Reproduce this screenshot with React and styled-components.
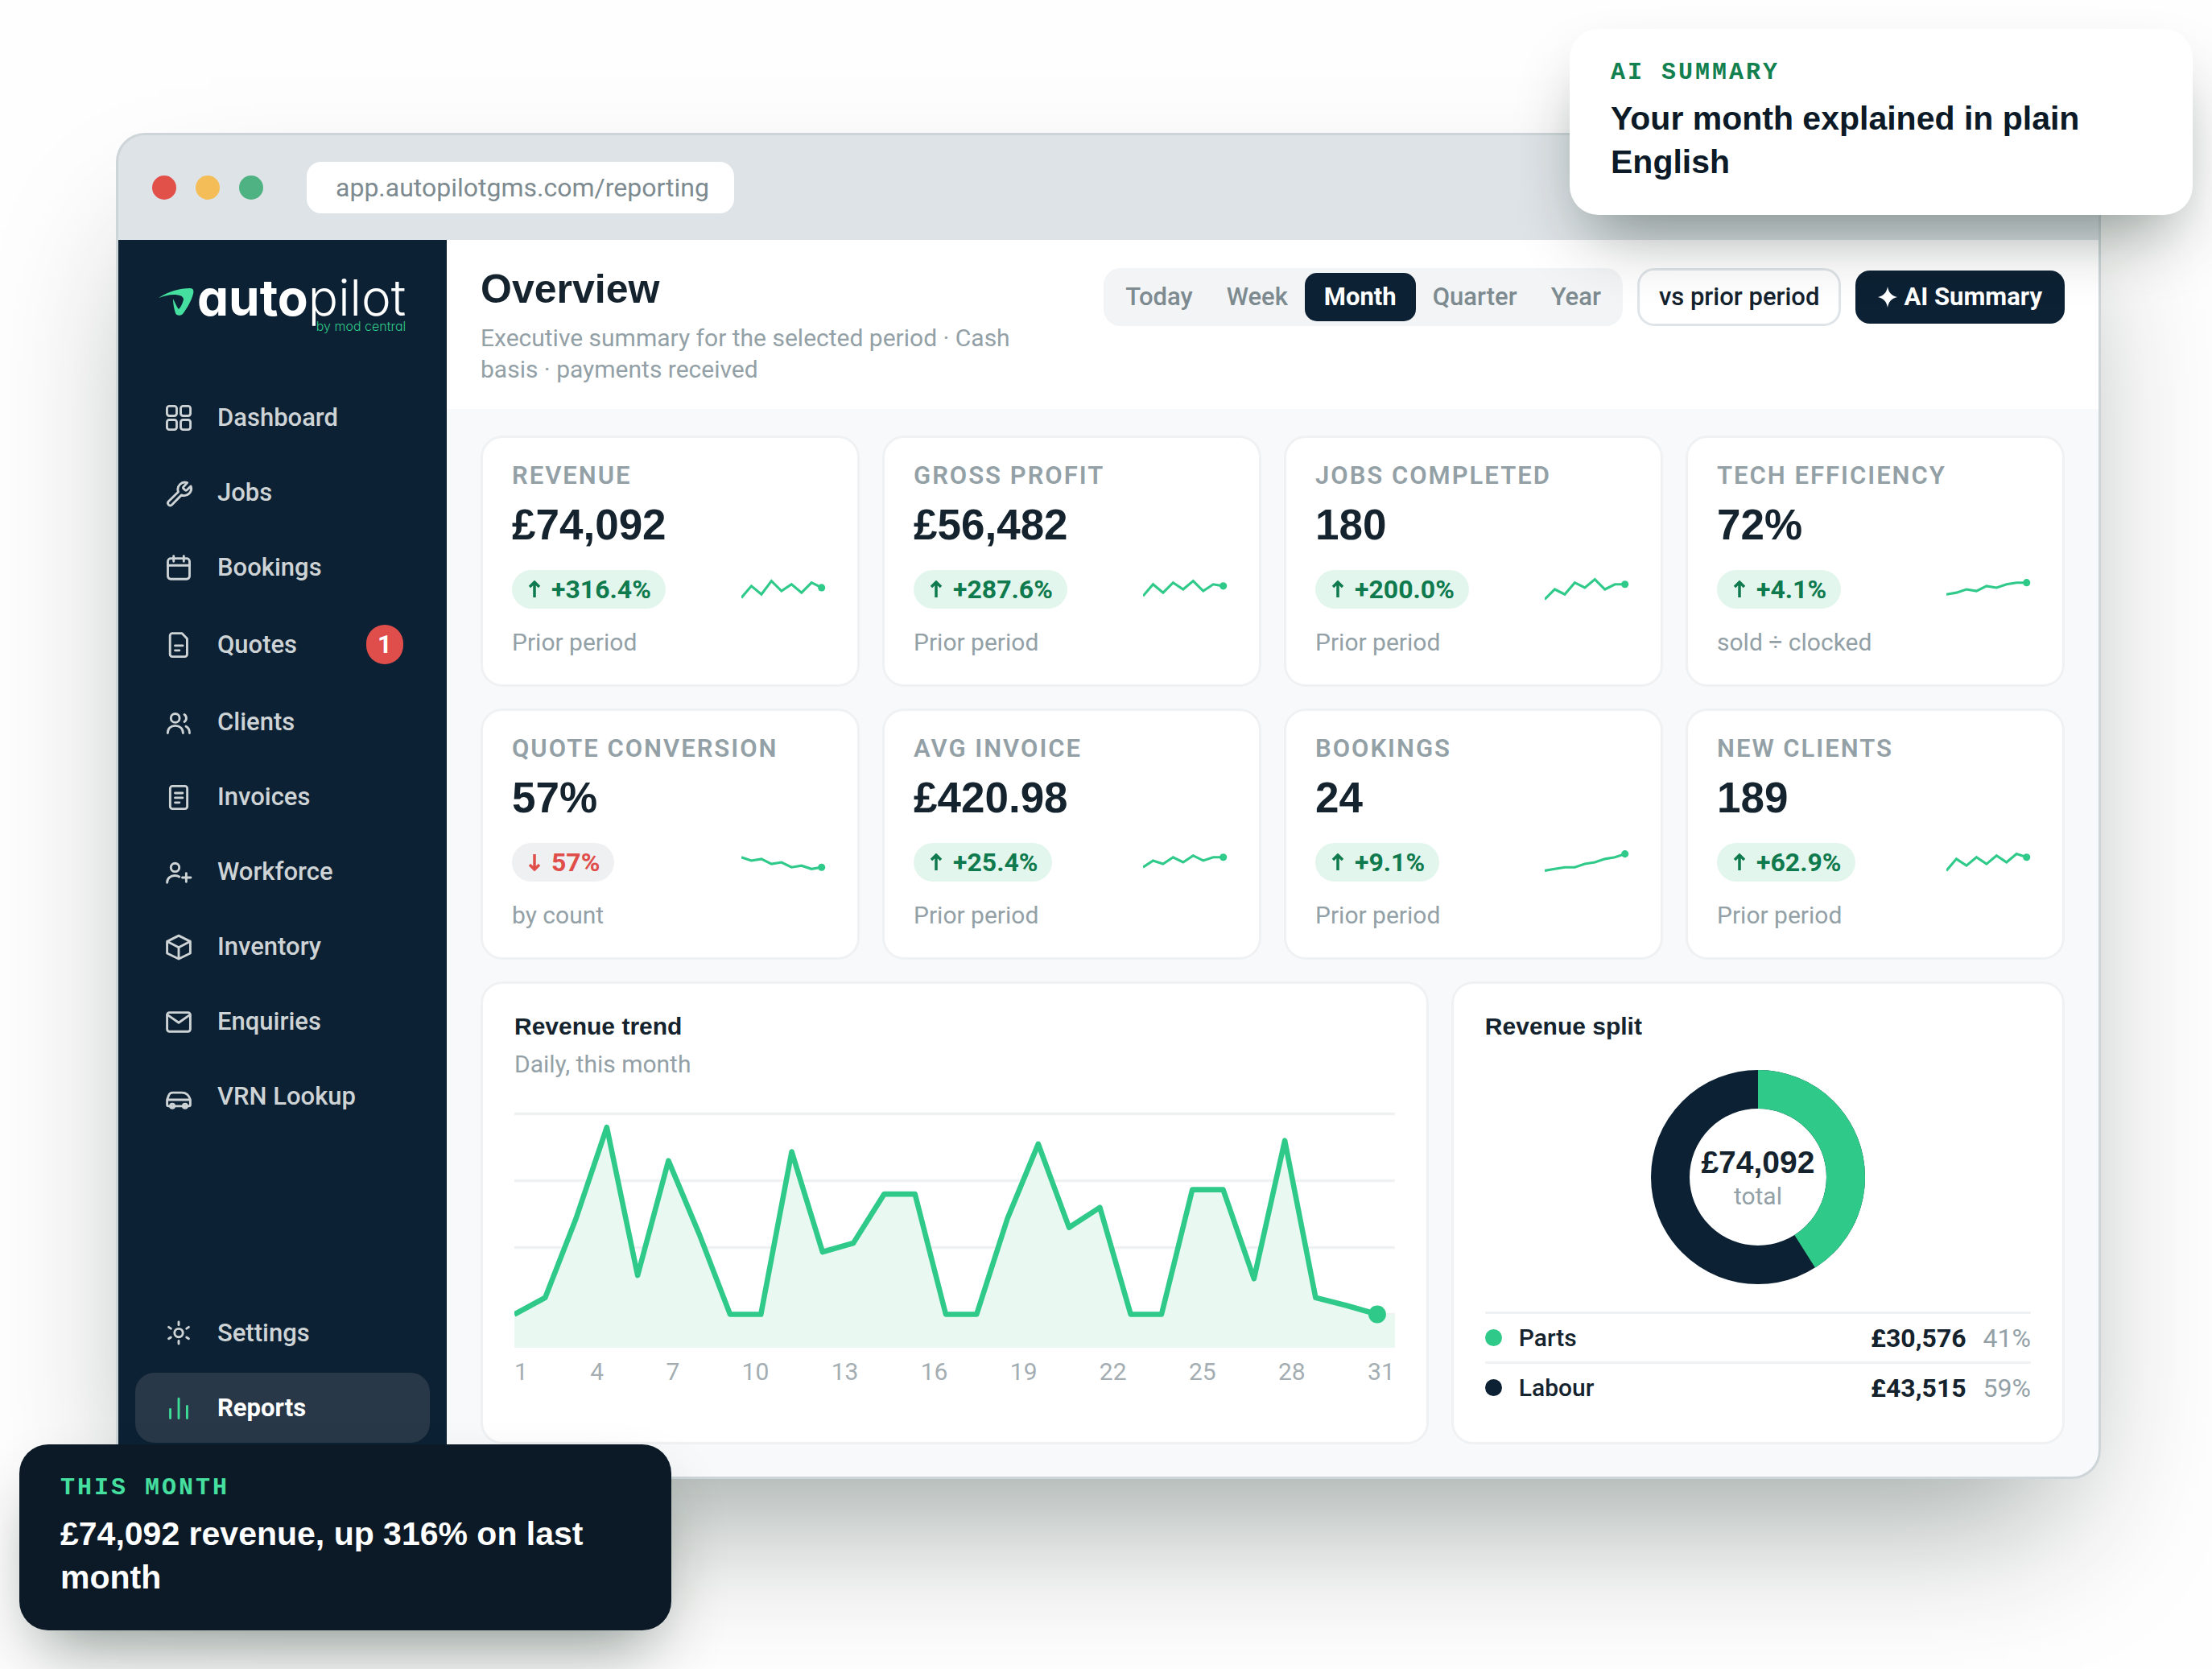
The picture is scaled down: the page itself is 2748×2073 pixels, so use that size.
import React from 'react';
import styled, { createGlobalStyle } from 'styled-components';

const sans = 'Roboto, "Noto Sans", sans-serif';
const display = '"Liberation Sans", Arial, sans-serif';
const mono = '"Liberation Mono", "Courier New", monospace';

const navy = '#0c2133';
const ink = '#14232d';
const grey = '#93a1a7';
const green = '#2fca89';
const line = '#eff1f3';

const mainNav = [
  { label: 'Dashboard', icon: 'dashboard' },
  { label: 'Jobs', icon: 'jobs' },
  { label: 'Bookings', icon: 'bookings' },
  { label: 'Quotes', icon: 'quotes', badge: 1 },
  { label: 'Clients', icon: 'clients' },
  { label: 'Invoices', icon: 'invoices' },
  { label: 'Workforce', icon: 'workforce' },
  { label: 'Inventory', icon: 'inventory' },
  { label: 'Enquiries', icon: 'enquiries' },
  { label: 'VRN Lookup', icon: 'vrn' },
];

const footNav = [
  { label: 'Settings', icon: 'settings' },
  { label: 'Reports', icon: 'reports', active: true },
];

const periods = ['Today', 'Week', 'Month', 'Quarter', 'Year'];

const kpis = [
  { label: 'Revenue', value: '£74,092', change: '+316.4%', note: 'Prior period', spark: [15, 8, 13, 5, 11, 7, 12, 6, 9] },
  { label: 'Gross profit', value: '£56,482', change: '+287.6%', note: 'Prior period', spark: [14, 7, 12, 6, 10, 5, 11, 7, 8] },
  { label: 'Jobs completed', value: '180', change: '+200.0%', note: 'Prior period', spark: [16, 10, 13, 6, 9, 4, 10, 7, 7] },
  { label: 'Tech efficiency', value: '72%', change: '+4.1%', note: 'sold ÷ clocked', spark: [13, 12, 10, 11, 8, 9, 7, 6, 6] },
  { label: 'Quote conversion', value: '57%', change: '57%', down: true, note: 'by count', spark: [7, 9, 8, 11, 10, 13, 12, 14, 13] },
  { label: 'Avg invoice', value: '£420.98', change: '+25.4%', note: 'Prior period', spark: [13, 9, 11, 7, 10, 6, 9, 7, 7] },
  { label: 'Bookings', value: '24', change: '+9.1%', note: 'Prior period', spark: [15, 14, 13, 13, 11, 10, 8, 7, 5] },
  { label: 'New clients', value: '189', change: '+62.9%', note: 'Prior period', spark: [15, 8, 12, 7, 11, 6, 10, 5, 7] },
];

const trend = [
  105, 97.5, 62, 21, 87.5, 36, 69, 105, 105, 32, 77, 73, 51, 51, 105,
  105, 62, 28.5, 66, 57, 105, 105, 49, 49, 89, 27, 97.5, 101, 105,
];
const days = [1, 4, 7, 10, 13, 16, 19, 22, 25, 28, 31];

const split = [
  { label: 'Parts', amount: '£30,576', share: 41, color: green },
  { label: 'Labour', amount: '£43,515', share: 59, color: navy },
];

const icons = {
  dashboard: (
    <>
      <rect x="1.9" y="1.9" width="6.7" height="6.7" rx="1.6" />
      <rect x="11.4" y="1.9" width="6.7" height="6.7" rx="1.6" />
      <rect x="1.9" y="11.4" width="6.7" height="6.7" rx="1.6" />
      <rect x="11.4" y="11.4" width="6.7" height="6.7" rx="1.6" />
    </>
  ),
  jobs: <path d="M15.9 3.1a4.9 4.9 0 0 0-6.2 6.3L3 16a1.7 1.7 0 0 0 0 2.3 1.7 1.7 0 0 0 2.3 0l6.6-6.7a4.9 4.9 0 0 0 6.5-6.1l-2.7 2.6a1 1 0 0 1-1.4 0l-.9-.9a1 1 0 0 1 0-1.4z" />,
  bookings: (
    <>
      <rect x="2.5" y="3.7" width="15" height="14.2" rx="2" />
      <path d="M2.5 8.5h15M6.5 2v3.7M13.5 2v3.7" />
    </>
  ),
  quotes: <path d="M5.6 2h6.6l3.6 3.7v10.8a1.6 1.6 0 0 1-1.6 1.6H5.6A1.6 1.6 0 0 1 4 16.5V3.6A1.6 1.6 0 0 1 5.6 2zM7.5 10.5h5.3M7.5 13.8h3" />,
  clients: (
    <>
      <circle cx="7.6" cy="7.2" r="3" />
      <path d="M2.4 17.5c0-3.2 2.2-5.1 5.2-5.1s5.4 1.9 5.4 5.1M13.9 4.7a3 3 0 0 1 0 5M15 12.9c1.6.8 2.5 2.4 2.5 4.6" />
    </>
  ),
  invoices: (
    <>
      <rect x="4.1" y="2.4" width="11.8" height="15.7" rx="1.6" />
      <path d="M7.5 7.2h5.2M7.5 10.5h5.2M7.5 13.8h3" />
    </>
  ),
  workforce: (
    <>
      <circle cx="7.5" cy="6.9" r="2.9" />
      <path d="M2 17.4c0-3 2.4-4.9 5.3-4.9 1.2 0 2.3.3 3.1.8M12.5 13.9h5.8M15.2 10.9v5.9" />
    </>
  ),
  inventory: <path d="M10 2.3l8 4v8.1l-8 3.9-8-3.9V6.3zM2 6.3l8 4.1 8-4.1M10 10.4v7.9" />,
  enquiries: (
    <>
      <rect x="2" y="3.7" width="16" height="13.1" rx="1.6" />
      <path d="M2.2 5.2L10 10.7l7.8-5.5" />
    </>
  ),
  vrn: (
    <>
      <path d="M2 12.2l1-2.7c.5-1.5 1.4-2.2 2.8-2.2h6.4c3.1 0 5 2 5.8 4.9v3.4a1 1 0 0 1-1 1H3a1 1 0 0 1-1-1zM2 12.2h16" />
      <circle cx="5.6" cy="16.5" r="1.4" />
      <circle cx="14.4" cy="16.5" r="1.4" />
    </>
  ),
  settings: (
    <>
      <circle cx="10" cy="10.3" r="2.9" />
      <path d="M10 2.8v2M10 15.8v2M3.1 6.3l1.5 1M15.4 13.3l1.5 1M3.1 14.3l1.5-1M15.4 7.3l1.5-1" />
    </>
  ),
  reports: <path d="M4.2 11.3v6.2M10 4v13.5M15.8 9.1v8.4" />,
};

const Icon = ({ name }) => (
  <NavIcon viewBox="0 0 20 20" aria-hidden="true">
    {icons[name]}
  </NavIcon>
);

const NavLink = ({ item }) => (
  <NavItem href="#" $active={item.active}>
    <Icon name={item.icon} />
    <span>{item.label}</span>
    {item.badge && <Badge>{item.badge}</Badge>}
  </NavItem>
);

const Logo = () => (
  <Brand>
    <Swoosh viewBox="0 0 44 34" aria-hidden="true">
      <path d="M0 12C12 4 26 0 39 0c4 0 5 2 4 7-2 8-7 17-13 25-3 3-8 2-9-1-2-6-3-12-3-18 3 6 5 11 7 13 3-3 5-8 6-12 0-4-5-6-12-6-6 0-13 2-19 4z" />
    </Swoosh>
    <Wordmark>
      <b>auto</b>pilot
      <Byline>by mod central</Byline>
    </Wordmark>
  </Brand>
);

const Sparkline = ({ data }) => {
  const points = data.map((y, i) => `${i * 6},${y}`).join(' ');
  return (
    <Spark viewBox="0 0 52 20" aria-hidden="true">
      <polyline points={points} />
      <circle cx="48" cy={data[data.length - 1]} r="2.2" />
    </Spark>
  );
};

const KpiCard = ({ item }) => (
  <Kpi>
    <KpiLabel>{item.label}</KpiLabel>
    <KpiValue>{item.value}</KpiValue>
    <KpiRow>
      <Pill $down={item.down}>
        <svg viewBox="0 0 16 22" aria-hidden="true">
          <path d={item.down ? 'M8 1v19M2 14l6 6 6-6' : 'M8 21V2M2 8l6-6 6 6'} />
        </svg>
        {item.change}
      </Pill>
      <Sparkline data={item.spark} />
    </KpiRow>
    <Muted>{item.note}</Muted>
  </Kpi>
);

const TrendChart = () => {
  const points = trend.map((y, i) => `${i * 14},${y}`).join(' ');
  return (
    <Chart viewBox="0 0 400 120" preserveAspectRatio="none" role="img" aria-label="Daily revenue">
      {[15, 45, 75, 105].map((y) => (
        <line key={y} x1="0" x2="400" y1={y} y2={y} />
      ))}
      <polygon points={`${points} 400,105 400,120 0,120`} />
      <polyline points={points} />
      <circle cx="392" cy="105" r="4" />
    </Chart>
  );
};

const App = () => {
  const ring = 2 * Math.PI * 109;
  return (
    <Stage>
      <GlobalStyle />
      <Browser>
        <TitleBar>
          <Light $color="#e2504a" />
          <Light $color="#f4bd58" />
          <Light $color="#4fb282" />
          <Address aria-label="Address" readOnly value="app.autopilotgms.com/reporting" />
        </TitleBar>
        <Body>
          <Sidebar>
            <Logo />
            <Nav>
              {mainNav.map((item) => (
                <NavLink key={item.label} item={item} />
              ))}
            </Nav>
            <Nav>
              {footNav.map((item) => (
                <NavLink key={item.label} item={item} />
              ))}
            </Nav>
          </Sidebar>
          <Main>
            <Header>
              <div>
                <Title>Overview</Title>
                <Subtitle>Executive summary for the selected period · Cash basis · payments received</Subtitle>
              </div>
              <Controls>
                <Segments>
                  {periods.map((p) => (
                    <Segment key={p} type="button" $active={p === 'Month'}>{p}</Segment>
                  ))}
                </Segments>
                <Compare type="button">vs prior period</Compare>
                <AiButton type="button">
                  <svg viewBox="0 0 24 26" aria-hidden="true">
                    <path d="M12 0c1.5 7.5 4.5 11 12 13-7.5 2-10.5 5.5-12 13-1.5-7.5-4.5-11-12-13 7.5-2 10.5-5.5 12-13z" />
                  </svg>
                  AI Summary
                </AiButton>
              </Controls>
            </Header>
            <Content>
              <KpiGrid>
                {kpis.map((item) => (
                  <KpiCard key={item.label} item={item} />
                ))}
              </KpiGrid>
              <Panels>
                <Panel>
                  <PanelTitle>Revenue trend</PanelTitle>
                  <PanelNote>Daily, this month</PanelNote>
                  <TrendChart />
                  <Axis>
                    {days.map((d) => (
                      <span key={d}>{d}</span>
                    ))}
                  </Axis>
                </Panel>
                <Panel>
                  <PanelTitle>Revenue split</PanelTitle>
                  <Donut>
                    <svg viewBox="0 0 266 266" role="img" aria-label="Parts 41%, Labour 59%">
                      <circle cx="133" cy="133" r="109" stroke={navy} />
                      <circle
                        cx="133"
                        cy="133"
                        r="109"
                        stroke={green}
                        strokeDasharray={`${ring * 0.41} ${ring}`}
                        transform="rotate(-90 133 133)"
                      />
                    </svg>
                    <DonutText>
                      <strong>£74,092</strong>
                      <span>total</span>
                    </DonutText>
                  </Donut>
                  <Legend>
                    <tbody>
                      {split.map((s) => (
                        <tr key={s.label}>
                          <th scope="row"><Dot $color={s.color} />{s.label}</th>
                          <td><b>{s.amount}</b>{s.share}%</td>
                        </tr>
                      ))}
                    </tbody>
                  </Legend>
                </Panel>
              </Panels>
            </Content>
          </Main>
        </Body>
      </Browser>
      <SummaryCallout>
        <Eyebrow>AI SUMMARY</Eyebrow>
        <Callout>Your month explained in plain English</Callout>
      </SummaryCallout>
      <MonthCallout>
        <Eyebrow>THIS MONTH</Eyebrow>
        <Callout>£74,092 revenue, up 316% on last month</Callout>
      </MonthCallout>
    </Stage>
  );
};

const GlobalStyle = createGlobalStyle`
  *, *::before, *::after {
    box-sizing: border-box;
  }
  body {
    margin: 0;
    background: #fefefe;
    color: ${ink};
    font-family: ${sans};
    font-size: 30px;
    line-height: 42px;
  }
  h1, h2, p {
    margin: 0;
  }
  button, input {
    font: inherit;
    color: inherit;
    border: 0;
  }
`;

const Stage = styled.div`
  position: relative;
  padding: 165px 138px 236px 144px;
  overflow: hidden;
`;

const Browser = styled.div`
  border: 3px solid #cdd5d8;
  border-radius: 36px;
  background: #dee3e7;
  box-shadow: 0 96px 180px -54px rgba(2, 24, 14, 0.4);
`;

const TitleBar = styled.div`
  display: flex;
  align-items: center;
  gap: 24px;
  height: 130px;
  padding: 0 42px;
`;

const Light = styled.span`
  width: 30px;
  height: 30px;
  border-radius: 50%;
  background: ${(p) => p.$color};
`;

const Address = styled.input`
  width: 531px;
  height: 64px;
  margin-left: 30px;
  padding: 0 24px 0 36px;
  border-radius: 18px;
  background: #fff;
  color: #7d8b90;
  font-size: 32px;
`;

const Body = styled.div`
  display: flex;
  border-radius: 0 0 33px 33px;
  overflow: hidden;
`;

const Sidebar = styled.aside`
  display: flex;
  flex-direction: column;
  flex: none;
  width: 408px;
  padding: 42px 21px;
  background: ${navy};
`;

const Brand = styled.div`
  display: flex;
  align-items: flex-start;
  margin: 0 0 75px 29px;
`;

const Swoosh = styled.svg`
  width: 44px;
  height: 34px;
  margin: 18px 4px 0 0;
  fill: #45e0a0;
`;

const Wordmark = styled.div`
  position: relative;
  color: #fff;
  font-family: Inter, sans-serif;
  font-feature-settings: 'cv11';
  font-size: 62px;
  font-weight: 300;
  line-height: 60px;
  b {
    font-weight: 700;
  }
`;

const Byline = styled.span`
  position: absolute;
  right: 0;
  top: 55px;
  color: ${green};
  font-size: 16px;
  line-height: 20px;
`;

const Nav = styled.nav`
  display: flex;
  flex-direction: column;
  gap: 6px;
  & + & {
    margin-top: auto;
  }
`;

const NavItem = styled.a`
  display: flex;
  align-items: center;
  gap: 30px;
  padding: 22px 33px 22px 36px;
  border-radius: 24px;
  background: ${(p) => (p.$active ? '#283848' : 'transparent')};
  color: ${(p) => (p.$active ? '#fff' : '#ced3d6')};
  font-size: 31px;
  font-weight: ${(p) => (p.$active ? 700 : 500)};
  line-height: 43px;
  text-decoration: none;
  svg {
    stroke: ${(p) => (p.$active ? '#3ddc97' : '#ced3d6')};
  }
`;

const NavIcon = styled.svg`
  flex: none;
  width: 36px;
  height: 36px;
  fill: none;
  stroke-width: 1.6;
  stroke-linecap: round;
  stroke-linejoin: round;
`;

const Badge = styled.span`
  min-width: 46px;
  margin-left: auto;
  border-radius: 25px;
  background: #e04e4c;
  color: #fff;
  font-weight: 700;
  line-height: 49px;
  text-align: center;
`;

const Main = styled.main`
  flex: 1;
  min-width: 0;
  background: #f7f9fb;
`;

const Header = styled.header`
  display: flex;
  justify-content: space-between;
  align-items: flex-start;
  gap: 18px;
  padding: 35px 42px 30px;
  background: #fff;
`;

const Title = styled.h1`
  font-family: ${display};
  font-size: 50px;
  font-weight: 700;
  line-height: 52px;
`;

const Subtitle = styled.p`
  max-width: 720px;
  margin-top: 15px;
  color: ${grey};
  line-height: 39px;
`;

const Controls = styled.div`
  display: flex;
  flex: none;
  align-items: center;
  gap: 18px;
  font-size: 31px;
`;

const Segments = styled.div`
  display: flex;
  padding: 6px;
  border-radius: 21px;
  background: #f3f4f6;
`;

const Segment = styled.button`
  padding: 9px ${(p) => (p.$active ? 24 : 21)}px;
  border-radius: 15px;
  background: ${(p) => (p.$active ? navy : 'transparent')};
  color: ${(p) => (p.$active ? '#fff' : '#7d8b90')};
  font-weight: ${(p) => (p.$active ? 700 : 500)};
`;

const Compare = styled.button`
  padding: 12px 24px;
  border: 3px solid #dfe4e8;
  border-radius: 21px;
  background: #fff;
  font-weight: 500;
`;

const AiButton = styled.button`
  display: flex;
  align-items: center;
  gap: 8px;
  padding: 12px 28px;
  border-radius: 18px;
  background: ${navy};
  color: #fff;
  font-weight: 700;
  svg {
    width: 24px;
    height: 26px;
    fill: currentColor;
  }
`;

const Content = styled.div`
  display: grid;
  gap: 27px;
  padding: 33px 42px 40px;
`;

const KpiGrid = styled.div`
  display: grid;
  grid-template-columns: repeat(4, 1fr);
  gap: 27px 28px;
`;

const Card = styled.section`
  border: 3px solid ${line};
  border-radius: 27px;
  background: #fff;
`;

const Kpi = styled(Card)`
  padding: 26px 36px 31px;
`;

const KpiLabel = styled.h2`
  color: ${grey};
  font-size: 31px;
  font-weight: 600;
  letter-spacing: 2px;
  text-transform: uppercase;
`;

const KpiValue = styled.p`
  margin-top: 10px;
  font-family: ${display};
  font-size: 53px;
  font-weight: 700;
  line-height: 60px;
`;

const KpiRow = styled.div`
  display: flex;
  justify-content: space-between;
  align-items: center;
  margin: 26px 0 21px;
`;

const Pill = styled.span`
  display: flex;
  align-items: center;
  gap: 13px;
  padding: 3px 18px 3px 20px;
  border-radius: 24px;
  background: ${(p) => (p.$down ? '#eff0f2' : '#e3f6ed')};
  color: ${(p) => (p.$down ? '#e04e4a' : '#0f7a4d')};
  font-size: 32px;
  font-weight: 700;
  svg {
    width: 16px;
    height: 22px;
    fill: none;
    stroke: currentColor;
    stroke-width: 3.5;
  }
`;

const Spark = styled.svg`
  width: 108px;
  height: 42px;
  polyline {
    fill: none;
    stroke: ${green};
    stroke-width: 1.5;
  }
  circle {
    fill: ${green};
  }
`;

const Muted = styled.p`
  color: ${grey};
`;

const Panels = styled.div`
  display: grid;
  grid-template-columns: 17fr 11fr;
  gap: 28px;
`;

const Panel = styled(Card)`
  padding: 32px 39px 36px;
`;

const PanelTitle = styled.h2`
  font-family: ${display};
  font-size: 30px;
  font-weight: 700;
`;

const PanelNote = styled(Muted)`
  margin-top: 6px;
  line-height: 40px;
`;

const Chart = styled.svg`
  display: block;
  width: 100%;
  height: 332px;
  line {
    stroke: ${line};
    stroke-width: 1.2;
  }
  polygon {
    fill: #e9f8f1;
  }
  polyline {
    fill: none;
    stroke: ${green};
    stroke-width: 2.4;
    stroke-linejoin: round;
  }
  circle {
    fill: ${green};
  }
`;

const Axis = styled.div`
  display: flex;
  justify-content: space-between;
  margin-top: 9px;
  color: #a3adb2;
`;

const Donut = styled.div`
  position: relative;
  width: 266px;
  height: 266px;
  margin: 33px auto 34px;
  circle {
    fill: none;
    stroke-width: 48px;
  }
`;

const DonutText = styled.div`
  position: absolute;
  inset: 0;
  display: flex;
  flex-direction: column;
  align-items: center;
  justify-content: center;
  padding-top: 6px;
  strong {
    font-family: ${display};
    font-size: 39px;
  }
  span {
    color: ${grey};
  }
`;

const Legend = styled.table`
  width: 100%;
  border-collapse: collapse;
  th,
  td {
    height: 62px;
    padding: 0;
    border-top: 3px solid ${line};
    font-weight: 500;
    text-align: left;
  }
  td {
    color: ${grey};
    font-size: 32px;
    font-weight: 400;
    text-align: right;
  }
  b {
    margin-right: 21px;
    color: ${ink};
    font-weight: 700;
  }
`;

const Dot = styled.span`
  display: inline-block;
  width: 21px;
  height: 21px;
  margin-right: 21px;
  border-radius: 50%;
  background: ${(p) => p.$color};
`;

const Float = styled.aside`
  position: absolute;
  padding: 33px 51px 39px;
  border-radius: 36px;
  box-shadow: 0 42px 84px -24px rgba(2, 24, 14, 0.45);
`;

const SummaryCallout = styled(Float)`
  top: 36px;
  right: 24px;
  width: 774px;
  background: #fff;
  color: #0b1a26;
  --accent: #12804f;
`;

const MonthCallout = styled(Float)`
  bottom: 48px;
  left: 24px;
  width: 810px;
  background: #0b1a26;
  color: #fff;
  --accent: #45e0a0;
`;

const Eyebrow = styled.p`
  color: var(--accent);
  font-family: ${mono};
  font-weight: 700;
  letter-spacing: 3px;
`;

const Callout = styled.p`
  margin-top: 9px;
  font-family: ${display};
  font-size: 41px;
  font-weight: 700;
  line-height: 54px;
`;

export default App;
